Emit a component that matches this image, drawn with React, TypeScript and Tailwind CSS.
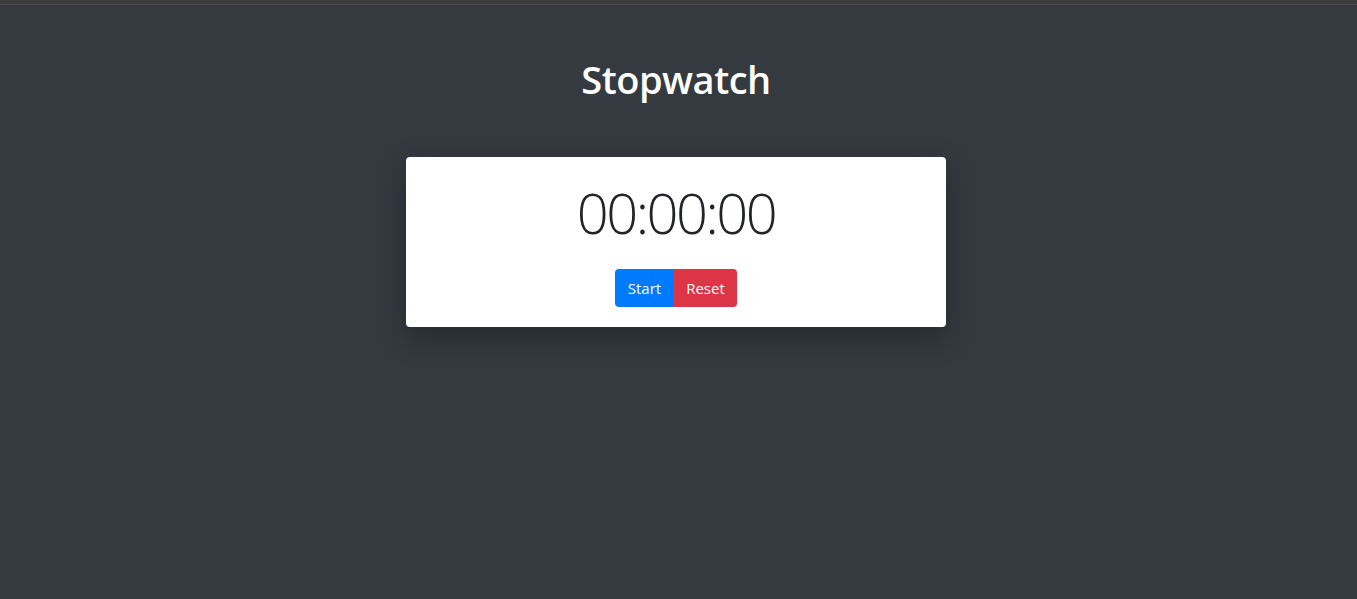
import { useState } from "react";

export default function App() {
  const [time] = useState("00:00:00");

  return (
    <div
      className="min-h-[599px] bg-[#343a40] flex flex-col"
      style={{ fontFamily: '"Open Sans", "Noto Sans", sans-serif' }}
    >
      {/* Top strip */}
      <div className="h-[4px] bg-[#3c3c3c] border-b border-[#4d4d4d] box-content" />

      <div className="flex flex-col items-center pr-[5px]">
        <h1 className="mt-[52px] text-[38px] leading-[44px] font-semibold text-white tracking-[-0.5px]">
          Stopwatch
        </h1>

        {/* Card */}
        <div className="mt-[56px] w-[540px] h-[170px] bg-white rounded-[4px] shadow-[0_10px_30px_rgba(0,0,0,0.3)] flex flex-col items-center">
          <div className="mt-[22px] text-[56px] leading-[66px] font-light text-[#212529] tracking-[-2.5px]">
            {time}
          </div>
          <div className="mt-[24px] flex">
            <button className="w-[59px] h-[38px] bg-[#007bff] text-white text-[15px] rounded-l-[4px]">
              Start
            </button>
            <button className="w-[63px] h-[38px] bg-[#dc3545] text-white text-[15px] rounded-r-[4px]">
              Reset
            </button>
          </div>
        </div>
      </div>
    </div>
  );
}
